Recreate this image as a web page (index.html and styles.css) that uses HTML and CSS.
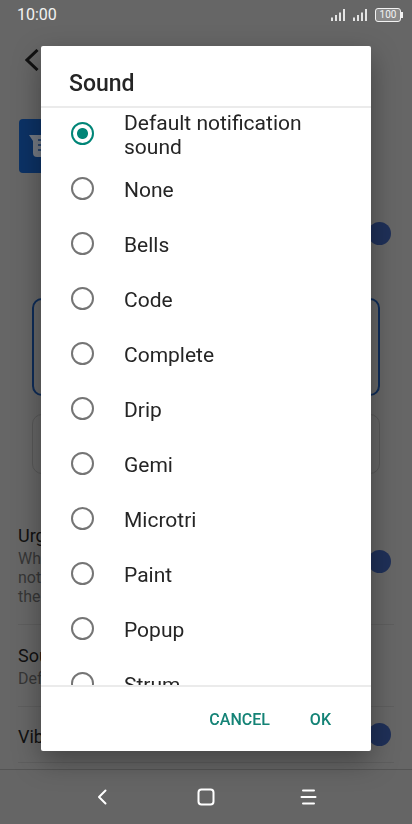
FILE: index.html
```html
<!DOCTYPE html>
<html lang="en">
<head>
    <meta charset="UTF-8">
    <meta name="viewport" content="width=device-width, initial-scale=1.0">
    <title>Sound</title>
    <link rel="stylesheet" href="styles.css">
</head>
<body>
    <header class="status-bar">
        <span class="clock">10:00</span>
        <div class="status-icons">
            <svg class="signal" viewBox="0 0 14 12" width="14" height="12"><path d="M1 8.5V12M5 6V12M9 3.5V12M13 0V12"/></svg>
            <svg class="signal" viewBox="0 0 14 12" width="14" height="12"><path d="M1 8.5V12M5 6V12M9 3.5V12M13 0V12"/></svg>
            <span class="battery">100</span>
        </div>
    </header>

    <main class="settings">
        <button class="back-btn" aria-label="Back">
            <svg viewBox="0 0 14 22" width="14" height="22"><path d="M12.500 1L2 11L12.500 21"/></svg>
        </button>
        <div class="app-icon">
            <svg viewBox="0 0 54 54" width="54" height="54">
                <path class="bubble" d="M10 16H39Q42 16 42 19V35Q42 38 39 38H18Q14 38 14 34V22Z"/>
                <path class="bubble-lines" d="M19 21H37M19 26H37M19 31H32"/>
            </svg>
        </div>
        <div class="toggle-row">
            <input type="checkbox" class="toggle" aria-label="Show notifications" checked>
        </div>
        <div class="choice selected"></div>
        <div class="choice"></div>
        <section class="setting urgent">
            <div>
                <h2>Urg</h2>
                <p>Wh<br>not<br>the</p>
            </div>
            <input type="checkbox" class="toggle" aria-label="Urgent" checked>
        </section>
        <section class="setting sound">
            <div>
                <h2>Sou</h2>
                <p>Def</p>
            </div>
        </section>
        <section class="setting vibrate">
            <h2>Vib</h2>
            <input type="checkbox" class="toggle" aria-label="Vibration" checked>
        </section>
    </main>

    <nav class="nav-bar">
        <button aria-label="Back"><svg viewBox="0 0 20 20" width="20" height="20"><path d="M12.500 3.500L6 10L12.500 16.500"/></svg></button>
        <button aria-label="Home"><svg viewBox="0 0 20 20" width="20" height="20"><rect x="2.500" y="2.500" width="15" height="15" rx="3"/></svg></button>
        <button aria-label="Menu"><svg viewBox="0 0 20 20" width="20" height="20"><path d="M4 3.500H15M2.500 10H16.500M4 16.500H15"/></svg></button>
    </nav>

    <div class="overlay">
        <form class="dialog" role="dialog" aria-labelledby="dialogTitle">
            <h1 id="dialogTitle">Sound</h1>
            <div class="options">
                <label class="option"><input type="radio" name="sound" checked><span>Default notification sound</span></label>
                <label class="option"><input type="radio" name="sound"><span>None</span></label>
                <label class="option"><input type="radio" name="sound"><span>Bells</span></label>
                <label class="option"><input type="radio" name="sound"><span>Code</span></label>
                <label class="option"><input type="radio" name="sound"><span>Complete</span></label>
                <label class="option"><input type="radio" name="sound"><span>Drip</span></label>
                <label class="option"><input type="radio" name="sound"><span>Gemi</span></label>
                <label class="option"><input type="radio" name="sound"><span>Microtri</span></label>
                <label class="option"><input type="radio" name="sound"><span>Paint</span></label>
                <label class="option"><input type="radio" name="sound"><span>Popup</span></label>
                <label class="option"><input type="radio" name="sound"><span>Strum</span></label>
            </div>
            <div class="actions">
                <button type="button">CANCEL</button>
                <button type="button">OK</button>
            </div>
        </form>
    </div>
</body>
</html>
```
FILE: styles.css
```css
* {
    box-sizing: border-box;
}
body {
    margin: 0;
    min-height: 100vh;
    display: flex;
    flex-direction: column;
    font-family: Roboto, sans-serif;
    background: #666;
    color: #111;
}
h1, h2, p {
    margin: 0;
    font-weight: 400;
}
button {
    padding: 0;
    border: none;
    background: none;
    font-family: inherit;
}
svg {
    display: block;
    fill: none;
}
.status-bar {
    display: flex;
    justify-content: space-between;
    align-items: center;
    height: 29px;
    padding: 0 11px 0 17px;
    color: #f2f2f2;
}
.clock {
    font-size: 16px;
}
.status-icons {
    display: flex;
    align-items: center;
    gap: 8px;
}
.signal {
    stroke: #e4e4e4;
    stroke-width: 2;
}
.battery {
    position: relative;
    width: 26px;
    height: 14px;
    border: 1px solid #f2f2f2;
    border-radius: 3px;
    background: #8a8a8a;
    font-size: 10px;
    line-height: 12px;
    text-align: center;
}
.battery::after {
    content: "";
    position: absolute;
    top: 3px;
    right: -3px;
    width: 2px;
    height: 6px;
    background: #f2f2f2;
}

.settings {
    flex: 1;
    padding: 20px 18px 0;
}
.back-btn {
    display: block;
    margin-left: 7px;
    stroke: #111;
    stroke-width: 3;
}
.app-icon {
    width: 54px;
    height: 54px;
    margin: 48px 0 0 1px;
    border-radius: 4px;
    background: #0c3265;
}
.bubble {
    fill: #747a83;
}
.bubble-lines {
    stroke: #2b466d;
    stroke-width: 2;
}
.toggle-row {
    display: flex;
    justify-content: flex-end;
    margin-top: 49px;
}
.toggle {
    appearance: none;
    flex: none;
    width: 23px;
    height: 23px;
    margin: 0 3px 0 0;
    border-radius: 50%;
    background: #1f3058;
}
.choice {
    height: 60px;
    margin: 18px 14px 0;
    border: 1px solid #585858;
    border-radius: 10px;
}
.choice.selected {
    height: 98px;
    margin-top: 53px;
    border: 2px solid #0e2c58;
}
.setting {
    display: flex;
    justify-content: space-between;
    align-items: center;
}
.setting h2 {
    font-size: 18px;
    line-height: 26px;
}
.setting p {
    color: #363636;
    font-size: 16px;
    line-height: 19px;
}
.urgent {
    margin-top: 49px;
    height: 102px;
    padding-bottom: 18px;
    border-bottom: 1px solid #5e5e5e;
}
.urgent .toggle {
    margin-top: -6px;
}
.sound {
    height: 82px;
    border-bottom: 1px solid #5e5e5e;
}
.vibrate {
    height: 56px;
    border-bottom: 1px solid #5e5e5e;
}
.vibrate h2 {
    padding-top: 4px;
}

.nav-bar {
    display: flex;
    justify-content: center;
    height: 55px;
    border-top: 1px solid #545454;
    background: #656565;
    stroke: #fff;
    stroke-width: 2;
    stroke-linecap: round;
    stroke-linejoin: round;
}
.nav-bar button {
    display: flex;
    justify-content: center;
    align-items: center;
    width: 25%;
}

.overlay {
    position: fixed;
    inset: 0;
    display: flex;
    padding: 46px 41px 73px;
}
.dialog {
    flex: 1;
    display: flex;
    flex-direction: column;
    min-width: 0;
    border-radius: 2px;
    background: #fff;
    color: #252525;
    box-shadow: 0 10px 28px rgba(0, 0, 0, 0.35);
}
.dialog h1 {
    padding: 24px 28px 8px;
    font-size: 23px;
    font-weight: 500;
    line-height: 28px;
}
.options {
    flex: 1;
    min-height: 0;
    overflow: hidden;
    border-top: 2px solid #ebebeb;
    border-bottom: 2px solid #ebebeb;
}
.option {
    display: flex;
    align-items: center;
    gap: 30px;
    height: 55px;
    padding: 0 56px 4px 30px;
    font-size: 21px;
    line-height: 24px;
}
.option span {
    padding-top: 2px;
}
.option input {
    appearance: none;
    flex: none;
    width: 23px;
    height: 23px;
    margin: 0;
    border: 2px solid #757575;
    border-radius: 50%;
}
.option input:checked {
    border-color: #008577;
    background: radial-gradient(circle, #008577 5px, transparent 6px);
}
.actions {
    display: flex;
    justify-content: flex-end;
    align-items: center;
    gap: 40px;
    height: 64px;
    padding: 2px 40px 0 0;
}
.actions button {
    color: #148376;
    font-size: 16px;
    font-weight: 500;
    line-height: 24px;
}
```
